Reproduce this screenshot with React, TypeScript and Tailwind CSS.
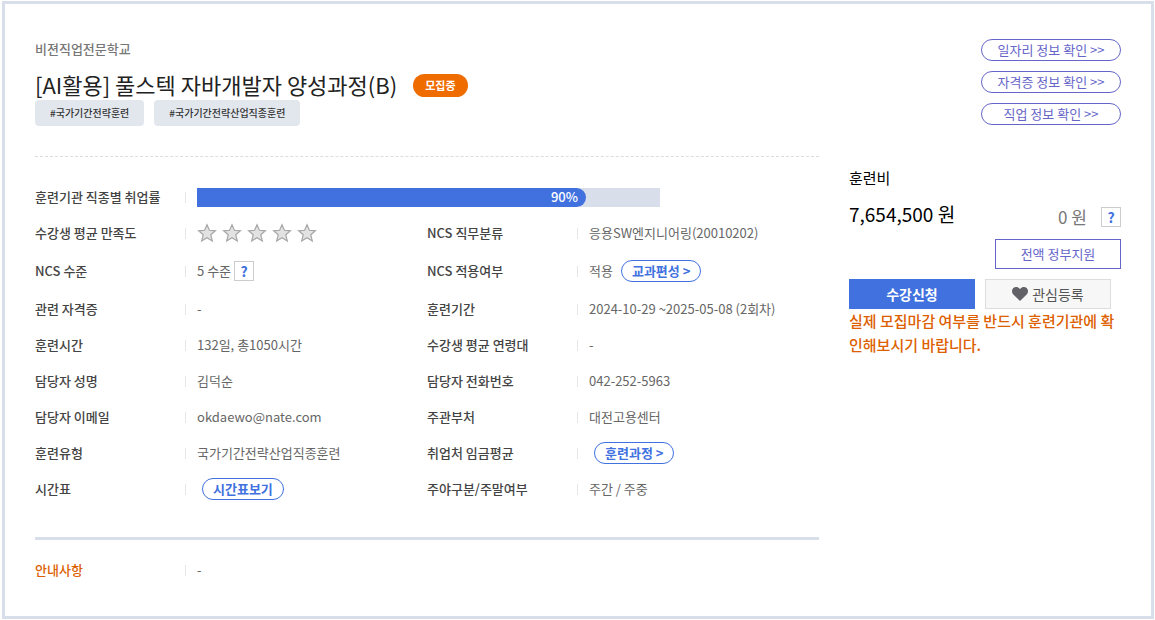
import type { ReactNode } from 'react';

const tags = ['#국가기간전략훈련', '#국가기간전략산업직종훈련'];

const infoLinks = ['일자리 정보 확인 >>', '자격증 정보 확인 >>', '직업 정보 확인 >>'];

const employmentRate = { label: '90%', fill: 84 };

function Field({ label, accent, children }: { label: string; accent?: boolean; children: ReactNode }) {
  return (
    <div className="flex items-center flex-1 min-w-0">
      <dt className={`w-[150px] shrink-0 font-medium ${accent ? 'text-[#dd6000]' : 'text-[#444]'}`}>{label}</dt>
      <dd className="flex items-center flex-1 min-w-0 text-[#666]">
        <span className="w-px h-[11px] mr-[11px] shrink-0 bg-[#e4e6e8]" />
        {children}
      </dd>
    </div>
  );
}

function Row({ tall, children }: { tall?: boolean; children: ReactNode }) {
  return <div className={`flex ${tall ? 'h-10' : 'h-9'}`}>{children}</div>;
}

function PillButton({ children }: { children: ReactNode }) {
  return (
    <button
      type="button"
      className="h-[22px] px-2.5 flex items-center rounded-full border border-[#4071df] bg-white font-bold text-[#4071df]"
    >
      {children}
    </button>
  );
}

function HelpButton() {
  return (
    <button
      type="button"
      aria-label="도움말"
      className="size-5 flex items-center justify-center border border-[#ccc] bg-white text-sm font-bold text-[#4071df]"
    >
      ?
    </button>
  );
}

function Star() {
  return (
    <svg viewBox="0 0 20 20" className="size-5" fill="#e2e2e2" stroke="#a6a6a6" strokeWidth="1.2">
      <path d="M10 1.7 12.4 7.3 18.4 7.8 13.8 11.8 15.3 17.9 10 14.7 4.7 17.9 6.2 11.8 1.6 7.8 7.6 7.3Z" />
    </svg>
  );
}

function Heart() {
  return (
    <svg viewBox="0 0 16 14" className="w-4 h-3.5" fill="#626168">
      <path d="M8 14 1.3 7.4C-.4 5.600-.4 2.900 1.100 1.300 2.900-.5 6-.4 8 2.100 10-.4 13.100-.5 14.900 1.300 16.400 2.900 16.400 5.600 14.700 7.400Z" />
    </svg>
  );
}

export default function App() {
  return (
    <div className="pt-px pl-0.5 pr-px pb-px bg-white font-['Noto_Sans_CJK_KR','Noto_Sans_KR',sans-serif] text-[13px] leading-5">
      <main className="flex gap-[30px] border-[3px] border-[#d8deea] px-[30px] pt-[35px] pb-7">
        <section className="flex-1 min-w-0">
          <p className="font-medium text-[#777]">비젼직업전문학교</p>
          <div className="flex items-center gap-4 mt-[11px]">
            <h1 className="pb-0.5 text-[22px] leading-7 text-[#222]">[AI활용] 풀스텍 자바개발자 양성과정(B)</h1>
            <span className="h-[23px] px-3 flex items-center rounded-full bg-[#ef6c00] text-[11px] font-bold text-white">
              모집중
            </span>
          </div>
          <ul className="flex gap-2.5">
            {tags.map((tag) => (
              <li key={tag} className="h-[26px] px-[15px] flex items-center rounded bg-[#e2e7ee] text-[10px] font-medium text-[#333]">
                {tag}
              </li>
            ))}
          </ul>

          <dl className="mt-[30px] pt-[22px] border-t border-dashed border-[#ddd]">
            <Row>
              <Field label="훈련기관 직종별 취업률">
                <div className="w-[463px] h-[19px] bg-[#d8deea]">
                  <div
                    className="h-full flex items-center justify-end pr-2 rounded-r-full bg-[#4071df] font-medium text-white"
                    style={{ width: `${employmentRate.fill}%` }}
                  >
                    {employmentRate.label}
                  </div>
                </div>
              </Field>
            </Row>
            <Row>
              <Field label="수강생 평균 만족도">
                <div className="flex gap-[5px]" role="img" aria-label="평점 0점">
                  <Star />
                  <Star />
                  <Star />
                  <Star />
                  <Star />
                </div>
              </Field>
              <Field label="NCS 직무분류">응용SW엔지니어링(20010202)</Field>
            </Row>
            <Row tall>
              <Field label="NCS 수준">
                <span className="mr-[3px]">5 수준</span>
                <HelpButton />
              </Field>
              <Field label="NCS 적용여부">
                <span className="mr-2">적용</span>
                <PillButton>교과편성 &gt;</PillButton>
              </Field>
            </Row>
            <Row>
              <Field label="관련 자격증">-</Field>
              <Field label="훈련기간">2024-10-29 ~2025-05-08 (2회차)</Field>
            </Row>
            <Row>
              <Field label="훈련시간">132일, 총1050시간</Field>
              <Field label="수강생 평균 연령대">-</Field>
            </Row>
            <Row>
              <Field label="담당자 성명">김덕순</Field>
              <Field label="담당자 전화번호">042-252-5963</Field>
            </Row>
            <Row>
              <Field label="담당자 이메일">okdaewo@nate.com</Field>
              <Field label="주관부처">대전고용센터</Field>
            </Row>
            <Row>
              <Field label="훈련유형">국가기간전략산업직종훈련</Field>
              <Field label="취업처 임금평균">
                <div className="pl-[5px]">
                  <PillButton>훈련과정 &gt;</PillButton>
                </div>
              </Field>
            </Row>
            <Row>
              <Field label="시간표">
                <div className="pl-[5px]">
                  <PillButton>시간표보기</PillButton>
                </div>
              </Field>
              <Field label="주야구분/주말여부">주간 / 주중</Field>
            </Row>
          </dl>

          <dl className="mt-[30px] pt-3 border-t-[3px] border-[#d8deea]">
            <Row>
              <Field label="안내사항" accent>
                -
              </Field>
            </Row>
          </dl>
        </section>

        <aside className="w-[272px] shrink-0">
          <nav className="flex flex-col items-end gap-2.5">
            {infoLinks.map((text) => (
              <a
                key={text}
                href="#"
                className="w-[140px] h-[22px] flex items-center justify-center rounded-full border border-[#6665c9] text-[#6665c9]"
              >
                {text}
              </a>
            ))}
          </nav>

          <h2 className="mt-[42px] text-[15px] leading-[22px] text-black">훈련비</h2>
          <div className="flex items-start justify-between mt-3 h-[30px]">
            <strong className="text-[19px] leading-[26px] font-normal text-black">7,654,500 원</strong>
            <div className="flex items-center gap-3.5 h-8">
              <span className="text-[17px] text-[#777]">0 원</span>
              <HelpButton />
            </div>
          </div>
          <div className="flex justify-end mt-2">
            <button type="button" className="w-[126px] h-[30px] border border-[#6665c9] bg-white text-[#6665c9]">
              전액 정부지원
            </button>
          </div>
          <div className="flex gap-2.5 mt-2.5 text-sm">
            <button type="button" className="w-[126px] h-[30px] bg-[#4071df] font-bold text-white">
              수강신청
            </button>
            <button
              type="button"
              className="w-[126px] h-[30px] flex items-center justify-center gap-1 border border-[#ddd] bg-[#f7f7f7] text-[#555]"
            >
              <Heart />
              관심등록
            </button>
          </div>
          <p className="text-[15px] leading-6 font-medium text-[#dd6000] break-all">
            실제 모집마감 여부를 반드시 훈련기관에 확인해보시기 바랍니다.
          </p>
        </aside>
      </main>
    </div>
  );
}
